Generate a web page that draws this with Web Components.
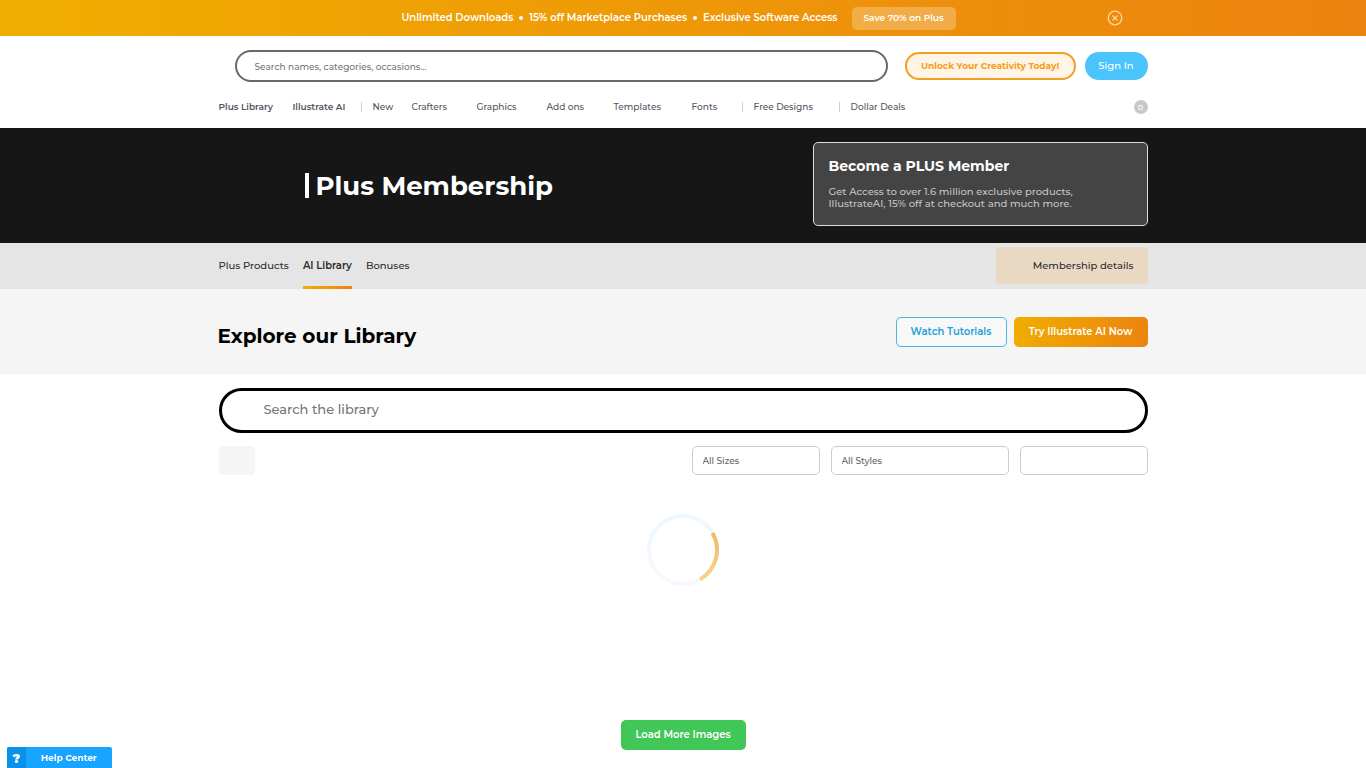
<!DOCTYPE html>
<html lang="en">
<head>
<meta charset="utf-8">
<meta name="viewport" content="width=device-width, initial-scale=1">
<title>Plus Membership</title>
<style>
body{margin:0;background:#fff;color:#222;font:500 9px/12px Montserrat,Inter,sans-serif;
--gold:linear-gradient(110deg,#f0ae00,#ec820f);--wrap:929px}
</style>
</head>
<body>
<promo-bar></promo-bar>
<site-header></site-header>
<main>
<plus-hero></plus-hero>
<section-tabs></section-tabs>
<library-intro>Explore our Library</library-intro>
<library-browser></library-browser>
</main>
<help-widget>Help Center</help-widget>
<script>
const base = `*{box-sizing:border-box}:host{display:block}a{color:inherit;text-decoration:none}
button,input,select{font:inherit;margin:0}button{cursor:pointer;white-space:nowrap}
.wrap{max-width:var(--wrap);margin:0 auto}`;
function define(name, css, html){
  const template = document.createElement('template');
  template.innerHTML = `<style>${base}${css}</style>${html}`;
  customElements.define(name, class extends HTMLElement{
    constructor(){
      super();
      this.attachShadow({mode:'open'}).append(template.content.cloneNode(true));
    }
  });
}

define('pill-button', `:host{display:inline-block}
button{height:var(--h,30px);padding:0;width:100%;border:var(--border,0);border-radius:var(--radius,5px);background:var(--fill,transparent);color:inherit;display:flex;align-items:center;justify-content:center}`,
`<button type="button"><slot></slot></button>`);

define('promo-bar', `:host{background:linear-gradient(90deg,#f0ae00,#ec820f);color:#fff}
.wrap{display:grid;grid-template-columns:1fr auto 1fr;align-items:center;height:36px;padding-right:9px}
.offer{grid-column:2;display:flex;align-items:center;font-weight:600;font-size:10px;white-space:nowrap}
i{width:4px;height:4px;margin:0 6px;border-radius:50%;background:#fff}
pill-button{margin-left:14px;width:104px;font-size:9px;--h:23px;--fill:#ffffff40}
.close{justify-self:end;margin-right:16px;border:0;padding:0;background:none;display:flex;color:#ffd79a}`,
`<div class="wrap"><div class="offer"><span>Unlimited Downloads</span><i></i><span>15% off Marketplace Purchases</span><i></i><span>Exclusive Software Access</span><pill-button>Save 70% on Plus</pill-button></div>
<button class="close" aria-label="Close"><svg width="16" height="16" viewBox="0 0 16 16" fill="none" stroke="currentColor" stroke-width="1.3"><circle cx="8" cy="8" r="6.8"/><path d="M5.5 5.5l5 5m0-5l-5 5"/></svg></button></div>`);

define('site-header', `:host{background:#fff;color:#54555f}
.top{display:flex;align-items:center;padding:14px 0 0 16px}
input{flex:1;min-width:0;height:32px;padding:0 18px;border:2px solid #68686b;border-radius:16px;background:#fff;color:#54555f;outline:0}
input::placeholder{color:#757579;opacity:1}
.unlock{width:171px;margin-left:17px;color:#f2a022;font-weight:700;--h:28px;--fill:#fff4e6;--border:2px solid #f2a022;--radius:14px}
.sign{width:63px;margin-left:9px;color:#fff;font-size:10px;--h:28px;--fill:#4bc4fc;--radius:14px}
nav{display:grid;grid-template-columns:74px 68px 12px 39px 65px 70px 67px 78px 50px 12px 85px 12px 1fr 14px;align-items:center;height:46px;padding-top:3px;white-space:nowrap}
b{font-weight:600}i{width:1px;height:10px;background:#d0d0d4}
.count{display:grid;place-items:center;width:14px;height:14px;border-radius:50%;background:#c9c9c9;color:#fff;font-size:8px}`,
`<header class="wrap"><div class="top"><input type="search" aria-label="Search" placeholder="Search names, categories, occasions..."><pill-button class="unlock">Unlock Your Creativity Today!</pill-button><pill-button class="sign">Sign In</pill-button></div>
<nav><a href="#"><b>Plus Library</b></a><a href="#"><b>Illustrate AI</b></a><i></i><a href="#">New</a><a href="#">Crafters</a><a href="#">Graphics</a><a href="#">Add ons</a><a href="#">Templates</a><a href="#">Fonts</a><i></i><a href="#">Free Designs</a><i></i><a href="#">Dollar Deals</a><a href="#" class="count">0</a></nav></header>`);

define('member-card', `:host{width:335px;height:84px;padding:15px 15px 0;border:1px solid #ddd;border-radius:5px;background:#444;color:#c4c4c4;font-size:10px;line-height:12px}
h2{margin:0 0 12px;color:#fff;font-size:14px;line-height:16px;font-weight:700;white-space:nowrap}
p{margin:0;white-space:nowrap}`,
`<h2><slot name="title"></slot></h2><p><slot></slot></p>`);

define('plus-hero', `:host{background:#161616;color:#fff}
.wrap{display:flex;align-items:center;justify-content:space-between;height:115px;padding-bottom:3px}
h1{display:flex;align-items:center;gap:7px;margin:3px 0 0 86px;font-size:26px;line-height:32px;font-weight:700;white-space:nowrap}
h1 i{width:4px;height:25px;background:#fff}`,
`<div class="wrap"><h1><i></i>Plus Membership</h1><member-card><span slot="title">Become a PLUS Member</span>Get Access to over 1.6 million exclusive products,<br>IllustrateAI, 15% off at checkout and much more.</member-card></div>`);

define('section-tabs', `:host{background:#e5e5e5;color:#2c2c2c;font-size:10px}
.wrap{display:flex;gap:14px;height:46px}
a{display:flex;align-items:center;white-space:nowrap}
.active{position:relative;font-weight:600}
.active::after{content:"";position:absolute;left:0;right:0;bottom:0;height:3px;background:var(--gold)}
.details{justify-content:flex-end;width:152px;height:37px;margin:4px 0 0 auto;padding-right:14px;border-radius:3px;background:#e9d9c3}`,
`<nav class="wrap"><a href="#">Plus Products</a><a href="#" class="active">AI Library</a><a href="#">Bonuses</a><a href="#" class="details">Membership details</a></nav>`);

define('library-intro', `:host{background:#f5f5f5;color:#000}
.wrap{display:flex;align-items:center;height:85px;gap:7px}
h2{flex:1;margin:9px 0 0 -1px;font-size:20px;line-height:24px;font-weight:700}
pill-button{width:134px;font-size:10px;font-weight:600;color:#fff;--fill:var(--gold)}
.watch{width:111px;color:#25a0d9;--fill:#f8f8f8;--border:1px solid #4db3df}`,
`<div class="wrap"><h2><slot></slot></h2><pill-button class="watch">Watch Tutorials</pill-button><pill-button>Try Illustrate AI Now</pill-button></div>`);

define('loading-ring', `:host{display:block;width:72px;height:72px}svg{display:block}`,
`<svg width="72" height="72" viewBox="0 0 72 72" fill="none" stroke-width="4"><defs><linearGradient id="ring" x1="0" y1="0" x2="0" y2="1"><stop stop-color="#eef7fe"/><stop offset="1" stop-color="#f5f9ff"/></linearGradient><linearGradient id="arc" x1="0" y1="0" x2="0" y2="1"><stop stop-color="#f4b764"/><stop offset="1" stop-color="#fad28d"/></linearGradient></defs><circle cx="36" cy="36" r="34" stroke="url(#ring)"/><path d="M65.4 19A34 34 0 0 1 53 65.4" stroke="url(#arc)"/></svg>`);

define('library-browser', `.wrap{padding-top:14px}
input{display:block;width:100%;height:45px;padding:0 42px 3px;border:3px solid #000;border-radius:23px;background:#fff;outline:0;font-size:13px}
input::placeholder{color:#757575;opacity:1}
.filters{display:grid;grid-template-columns:36px 1fr 128px 178px 128px;margin-top:13px;column-gap:11px}
.tile{height:29px;border-radius:4px;background:#f5f5f5;border:0}
select{appearance:none;height:29px;padding:0 10px;border:1px solid #ccc;border-radius:5px;background:#fff;color:#62636d}
.first{grid-column:3}
loading-ring{margin:39px auto 134px}
.more{display:block;width:125px;margin:0 auto;font-size:10px;font-weight:600;color:#fff;--fill:#41c757}`,
`<div class="wrap"><input type="search" aria-label="Search the library" placeholder="Search the library">
<div class="filters"><button class="tile" aria-label="Filter"></button><select class="first" aria-label="Size"><option>All Sizes</option></select><select aria-label="Style"><option>All Styles</option></select><select aria-label="Sort"><option></option></select></div>
<loading-ring></loading-ring><pill-button class="more">Load More Images</pill-button></div>`);

define('help-widget', `:host{position:fixed;left:7px;bottom:0}
button{display:flex;align-items:center;width:105px;height:21px;padding:0;border:0;border-radius:2px 2px 0 0;overflow:hidden;background:#18a5ff;color:#fff;font-weight:700}
b{width:19px;height:100%;line-height:22px;font-size:13px;background:#0b91e7}span{flex:1}`,
`<button type="button"><b>?</b><span><slot></slot></span></button>`);
</script>
</body>
</html>
